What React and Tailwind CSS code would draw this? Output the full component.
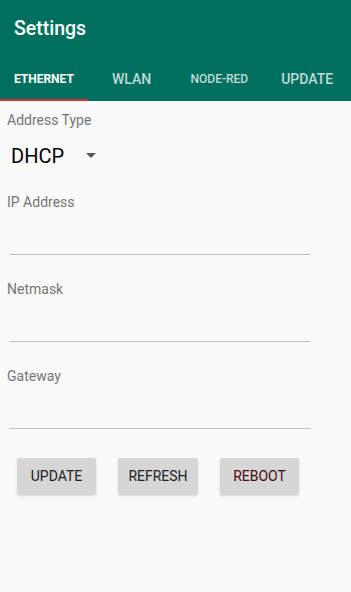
import React from "react";

const Field = ({ label }) => (
  <div className="flex flex-col">
    <div className="pl-[7px] h-[20px] leading-[20px] text-[14px] text-[#757575]">{label}</div>
    <div className="h-[42px]" />
    <div className="mx-[10px] w-[300px] h-px bg-[#bdbdbd]" />
    <div className="h-[24px]" />
  </div>
);

const App = () => {
  const tabs = [
    { name: "ETHERNET", cls: "text-[12px] font-bold text-white" },
    { name: "WLAN", cls: "text-[14px] font-medium text-white/75" },
    { name: "NODE-RED", cls: "text-[12px] font-medium text-white/75" },
    { name: "UPDATE", cls: "text-[14px] font-medium text-white/75" },
  ];

  return (
    <div className="w-[351px] h-[592px] bg-[#fafafa] font-['Roboto',sans-serif] overflow-hidden">
      <div className="bg-[#016f60]">
        <div className="h-[57px] flex items-center pl-[14px] text-white text-[19.5px] font-medium">Settings</div>
        <div className="h-[44px] grid grid-cols-4">
          {tabs.map((t, i) => (
            <div key={t.name} className="relative flex items-center justify-center">
              <span className={t.cls}>{t.name}</span>
              {i === 0 && <div className="absolute left-0 right-0 bottom-0 h-[2px] bg-[#d32f2f]" />}
            </div>
          ))}
        </div>
      </div>

      <div className="pt-[10px]">
        <div className="pl-[7px] text-[14px] leading-[18px] text-[#757575]">Address Type</div>
        <div className="flex items-center h-[36px] mt-[9px] pl-[11px]">
          <span className="text-[20px] text-black w-[75px]">DHCP</span>
          <svg width="10" height="5" viewBox="0 0 10 5" className="mb-[2px]">
            <path d="M0 0 L10 0 L5 5 Z" fill="#555" />
          </svg>
        </div>
      </div>

      <div className="mt-[18px]">
        <Field label="IP Address" />
        <Field label="Netmask" />
        <Field label="Gateway" />
      </div>

      <div className="flex gap-[22px] pl-[17px] mt-[5px]">
        <button className="w-[79px] h-[37px] bg-[#d6d6d6] rounded-[2px] shadow-sm text-[14px] text-[#212121]">UPDATE</button>
        <button className="w-[80px] h-[37px] bg-[#d6d6d6] rounded-[2px] shadow-sm text-[14px] text-[#212121]">REFRESH</button>
        <button className="w-[79px] h-[37px] bg-[#d6d6d6] rounded-[2px] shadow-sm text-[14px] text-[#4a0a10]">REBOOT</button>
      </div>
    </div>
  );
};

export default App;
